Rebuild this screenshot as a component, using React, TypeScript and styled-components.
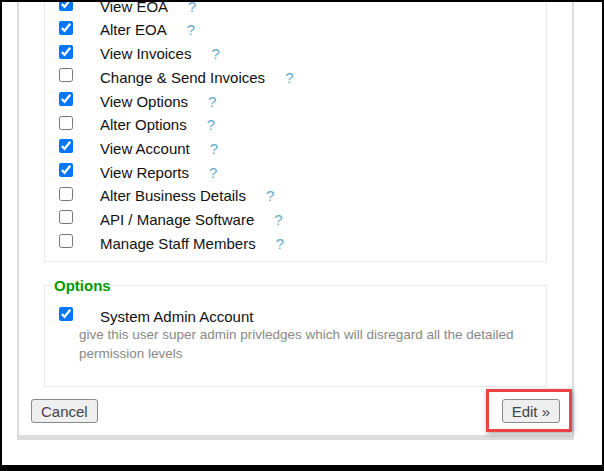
import styled, { createGlobalStyle } from 'styled-components';

const GlobalStyle = createGlobalStyle`
  html, body {
    margin: 0;
    padding: 0;
    background: #fff;
  }
  body {
    font-family: "Liberation Sans", Arial, sans-serif;
    color: #111;
  }
`;

// the page is scrolled to the bottom, so the frame stacks content from the bottom edge
const Frame = styled.div`
  box-sizing: border-box;
  width: 604px;
  height: 471px;
  border: solid #000;
  border-width: 2px 2px 6px 2px;
  background: #fff;
  overflow: hidden;
  display: flex;
  flex-direction: column;
  justify-content: flex-end;
  padding: 0 28px 25px 15px;
`;

const Panel = styled.div`
  flex: none;
  border: solid #ddd;
  border-width: 0 2px 5px 2px;
  padding: 0 12px 12px;
  display: flex;
  flex-direction: column;
`;

const Group = styled.fieldset<{ $padTop?: number; $padBottom: number; $gap?: number }>`
  margin: ${p => p.$gap ?? 0}px 13px 0;
  padding: ${p => p.$padTop ?? 0}px 7px ${p => p.$padBottom}px;
  border: 1px solid #e8e8e8;
  min-width: 0;
`;

const Legend = styled.legend`
  padding: 0 2px;
  font-size: 15px;
  line-height: 17px;
  font-weight: bold;
  color: #009a00;
`;

const Row = styled.label<{ $height: number }>`
  display: flex;
  align-items: center;
  height: ${p => p.$height}px;
  font-size: 15px;
  line-height: 17px;
  color: #111;
`;

const Check = styled.input`
  flex: none;
  width: 14px;
  height: 14px;
  margin: 0 27px 4px 7px;
`;

const HelpMark = styled.span`
  margin-left: 20px;
  color: #66a9cf;
  cursor: help;
`;

const Hint = styled.p`
  margin: 0;
  padding-left: 27px;
  font-size: 13.5px;
  line-height: 18.5px;
  color: #888;
`;

const Actions = styled.div`
  display: flex;
  justify-content: space-between;
  align-items: center;
  margin-top: 12px;
`;

const Button = styled.button`
  height: 24px;
  padding: 0 9px;
  font-family: "Liberation Sans", Arial, sans-serif;
  font-size: 15px;
  color: #444;
  background: #efefef;
  border: 1px solid #8a8a8a;
  border-radius: 3px;
`;

const Marked = styled.span`
  position: relative;
  display: inline-flex;
`;

const Highlight = styled.span`
  position: absolute;
  top: -10px;
  left: -16px;
  right: -12px;
  bottom: -9px;
  border: 3px solid #ee4242;
  box-shadow: 1px 2px 5px rgba(0, 0, 0, 0.35);
  pointer-events: none;
`;

const permissions = [
  { name: 'View EOA', on: true },
  { name: 'Alter EOA', on: true },
  { name: 'View Invoices', on: true },
  { name: 'Change & Send Invoices', on: false },
  { name: 'View Options', on: true },
  { name: 'Alter Options', on: false },
  { name: 'View Account', on: true },
  { name: 'View Reports', on: true },
  { name: 'Alter Business Details', on: false },
  { name: 'API / Manage Software', on: false },
  { name: 'Manage Staff Members', on: false },
];

export default function App() {
  return (
    <>
      <GlobalStyle />
      <Frame>
        <Panel>
          <Group $padBottom={6}>
            {permissions.map(p => (
              <Row key={p.name} $height={23.7}>
                <Check type="checkbox" defaultChecked={p.on} />
                {p.name}
                <HelpMark>?</HelpMark>
              </Row>
            ))}
          </Group>

          <Group $gap={15} $padTop={12} $padBottom={23}>
            <Legend>Options</Legend>
            <Row $height={20}>
              <Check type="checkbox" defaultChecked />
              System Admin Account
            </Row>
            <Hint>
              give this user super admin privledges which will disregard all the detailed
              permission levels
            </Hint>
          </Group>

          <Actions>
            <Button type="button">Cancel</Button>
            <Marked>
              <Button type="submit">Edit »</Button>
              <Highlight />
            </Marked>
          </Actions>
        </Panel>
      </Frame>
    </>
  );
}
